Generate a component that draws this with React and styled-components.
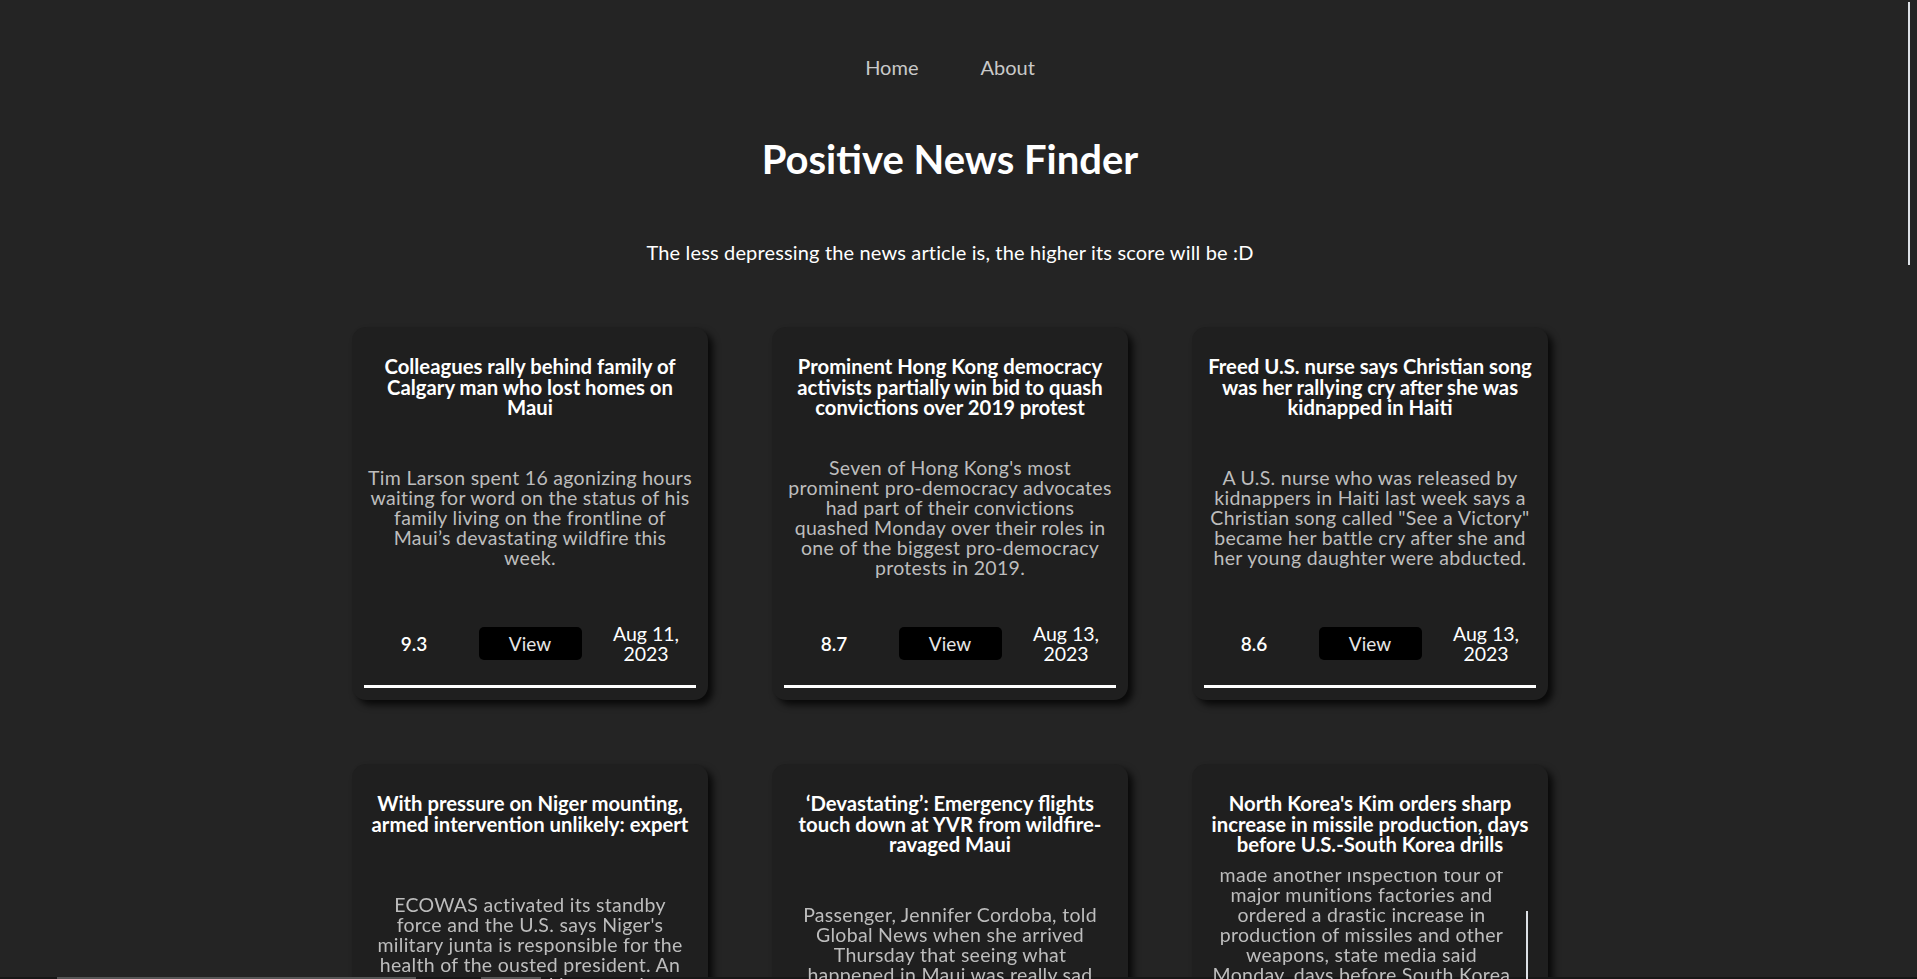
import React from "react";
import styled, { createGlobalStyle, css } from "styled-components";

const GlobalStyle = createGlobalStyle`
  body {
    margin: 0;
    background: #242424;
    font-family: Lato, "Noto Sans", sans-serif;
    color: #fff;
  }
`;

// descriptions kept line by line so they break the same way as the original layout
const articles = [
  {
    title: "Colleagues rally behind family of Calgary man who lost homes on Maui",
    desc: [
      "Tim Larson spent 16 agonizing hours",
      "waiting for word on the status of his",
      "family living on the frontline of",
      "Maui’s devastating wildfire this",
      "week.",
    ],
    score: "9.3",
    date: "Aug 11, 2023",
  },
  {
    title: "Prominent Hong Kong democracy activists partially win bid to quash convictions over 2019 protest",
    desc: [
      "Seven of Hong Kong's most",
      "prominent pro-democracy advocates",
      "had part of their convictions",
      "quashed Monday over their roles in",
      "one of the biggest pro-democracy",
      "protests in 2019.",
    ],
    score: "8.7",
    date: "Aug 13, 2023",
  },
  {
    title: "Freed U.S. nurse says Christian song was her rallying cry after she was kidnapped in Haiti",
    desc: [
      "A U.S. nurse who was released by",
      "kidnappers in Haiti last week says a",
      'Christian song called "See a Victory"',
      "became her battle cry after she and",
      "her young daughter were abducted.",
    ],
    score: "8.6",
    date: "Aug 13, 2023",
  },
  {
    title: "With pressure on Niger mounting, armed intervention unlikely: expert",
    desc: [
      "ECOWAS activated its standby",
      "force and the U.S. says Niger's",
      "military junta is responsible for the",
      "health of the ousted president. An",
      "expert says armed intervention",
      "remains unlikely.",
    ],
    score: "8.4",
    date: "Aug 12, 2023",
  },
  {
    title: "‘Devastating’: Emergency flights touch down at YVR from wildfire-ravaged Maui",
    desc: [
      "Passenger, Jennifer Cordoba, told",
      "Global News when she arrived",
      "Thursday that seeing what",
      "happened in Maui was really sad",
      "and heartbreaking.",
    ],
    score: "8.2",
    date: "Aug 11, 2023",
  },
  {
    title: "North Korea's Kim orders sharp increase in missile production, days before U.S.-South Korea drills",
    desc: [
      "North Korean leader Kim Jong Un",
      "made another inspection tour of",
      "major munitions factories and",
      "ordered a drastic increase in",
      "production of missiles and other",
      "weapons, state media said",
      "Monday, days before South Korea",
      "and the United States kick off",
      "annual military drills that the",
      "North views as an invasion",
      "rehearsal.",
    ],
    score: "8.1",
    date: "Aug 14, 2023",
    overflow: true,
  },
];

// page keeps room for the thin scrollbar on the right
const Page = styled.div`
  padding-right: 17px;
  display: flex;
  flex-direction: column;
  align-items: center;
`;

const ScrollThumb = styled.div`
  position: fixed;
  top: 2px;
  right: 7px;
  width: 2px;
  height: 263px;
  background: #dde1e6;
`;

const HScroll = styled.div`
  position: fixed;
  left: 0;
  right: 0;
  bottom: 0;
  height: 2px;
  background: linear-gradient(
    to right,
    #171717 57px,
    #565656 57px 416px,
    #171717 416px 481px,
    #565656 481px 541px,
    #171717 541px
  );
`;

const Nav = styled.nav`
  display: flex;
  gap: 62px;
  padding-top: 55px;
`;

const NavLink = styled.a`
  color: #c9c9c9;
  font-size: 20px;
  line-height: 24px;
  text-decoration: none;
  cursor: pointer;
`;

const Title = styled.h1`
  margin: 56px 0 0;
  font-size: 40px;
  line-height: 48px;
  font-weight: 700;
  color: #fff;
`;

const Subtitle = styled.p`
  margin: 57px 0 0;
  font-size: 20px;
  line-height: 24px;
  letter-spacing: 0.15px;
  color: #fff;
`;

const Grid = styled.div`
  margin-top: 63px;
  display: grid;
  grid-template-columns: repeat(3, 356px);
  gap: 64px;
`;

const Card = styled.div`
  box-sizing: border-box;
  height: 373px;
  padding: 0 12px 12px;
  border-radius: 14px;
  background: #1f1f1f;
  box-shadow: 5px 5px 7px rgba(0, 0, 0, 0.75);
  display: flex;
  flex-direction: column;
`;

const CardTitle = styled.h2`
  margin: 29px 0 0;
  height: 63px;
  font-size: 20.3px;
  line-height: 20.5px;
  font-weight: 700;
  text-align: center;
  color: #fff;
`;

const Desc = styled.div`
  position: relative;
  margin-top: 15px;
  height: 168px;
  overflow: hidden;
  display: flex;
  flex-direction: column;
  justify-content: center;
  text-align: center;
  font-size: 19.5px;
  line-height: 20px;
  letter-spacing: 0.3px;
  color: #bdbdbd;

  ${(p) =>
    p.$overflow &&
    css`
      padding-right: 17px;
      &::after {
        content: "";
        position: absolute;
        top: 40px;
        right: 8px;
        width: 2px;
        height: 140px;
        background: #dde1e6;
      }
    `}
`;

const DescLine = styled.span`
  display: block;
`;

const Footer = styled.div`
  height: 83px;
  border-bottom: 3px solid #fff;
  display: grid;
  grid-template-columns: 100px 1fr 100px;
  align-items: center;
  justify-items: center;
`;

const Score = styled.span`
  font-size: 19px;
  font-weight: 600;
`;

const ViewButton = styled.button`
  width: 103px;
  height: 33px;
  border: none;
  border-radius: 5px;
  background: #000;
  color: #e6e6e6;
  font-family: inherit;
  font-size: 19px;
  cursor: pointer;
`;

const DateText = styled.span`
  max-width: 80px;
  text-align: center;
  font-size: 19.5px;
  line-height: 20px;
`;

export default function App() {
  return (
    <>
      <GlobalStyle />
      <ScrollThumb />
      <HScroll />
      <Page>
        <Nav>
          <NavLink>Home</NavLink>
          <NavLink>About</NavLink>
        </Nav>
        <Title>Positive News Finder</Title>
        <Subtitle>The less depressing the news article is, the higher its score will be :D</Subtitle>
        <Grid>
          {articles.map((a) => (
            <Card key={a.title}>
              <CardTitle>{a.title}</CardTitle>
              <Desc $overflow={a.overflow}>
                <div>
                  {a.desc.map((line) => (
                    <DescLine key={line}>{line}</DescLine>
                  ))}
                </div>
              </Desc>
              <Footer>
                <Score>{a.score}</Score>
                <ViewButton>View</ViewButton>
                <DateText>{a.date}</DateText>
              </Footer>
            </Card>
          ))}
        </Grid>
      </Page>
    </>
  );
}
